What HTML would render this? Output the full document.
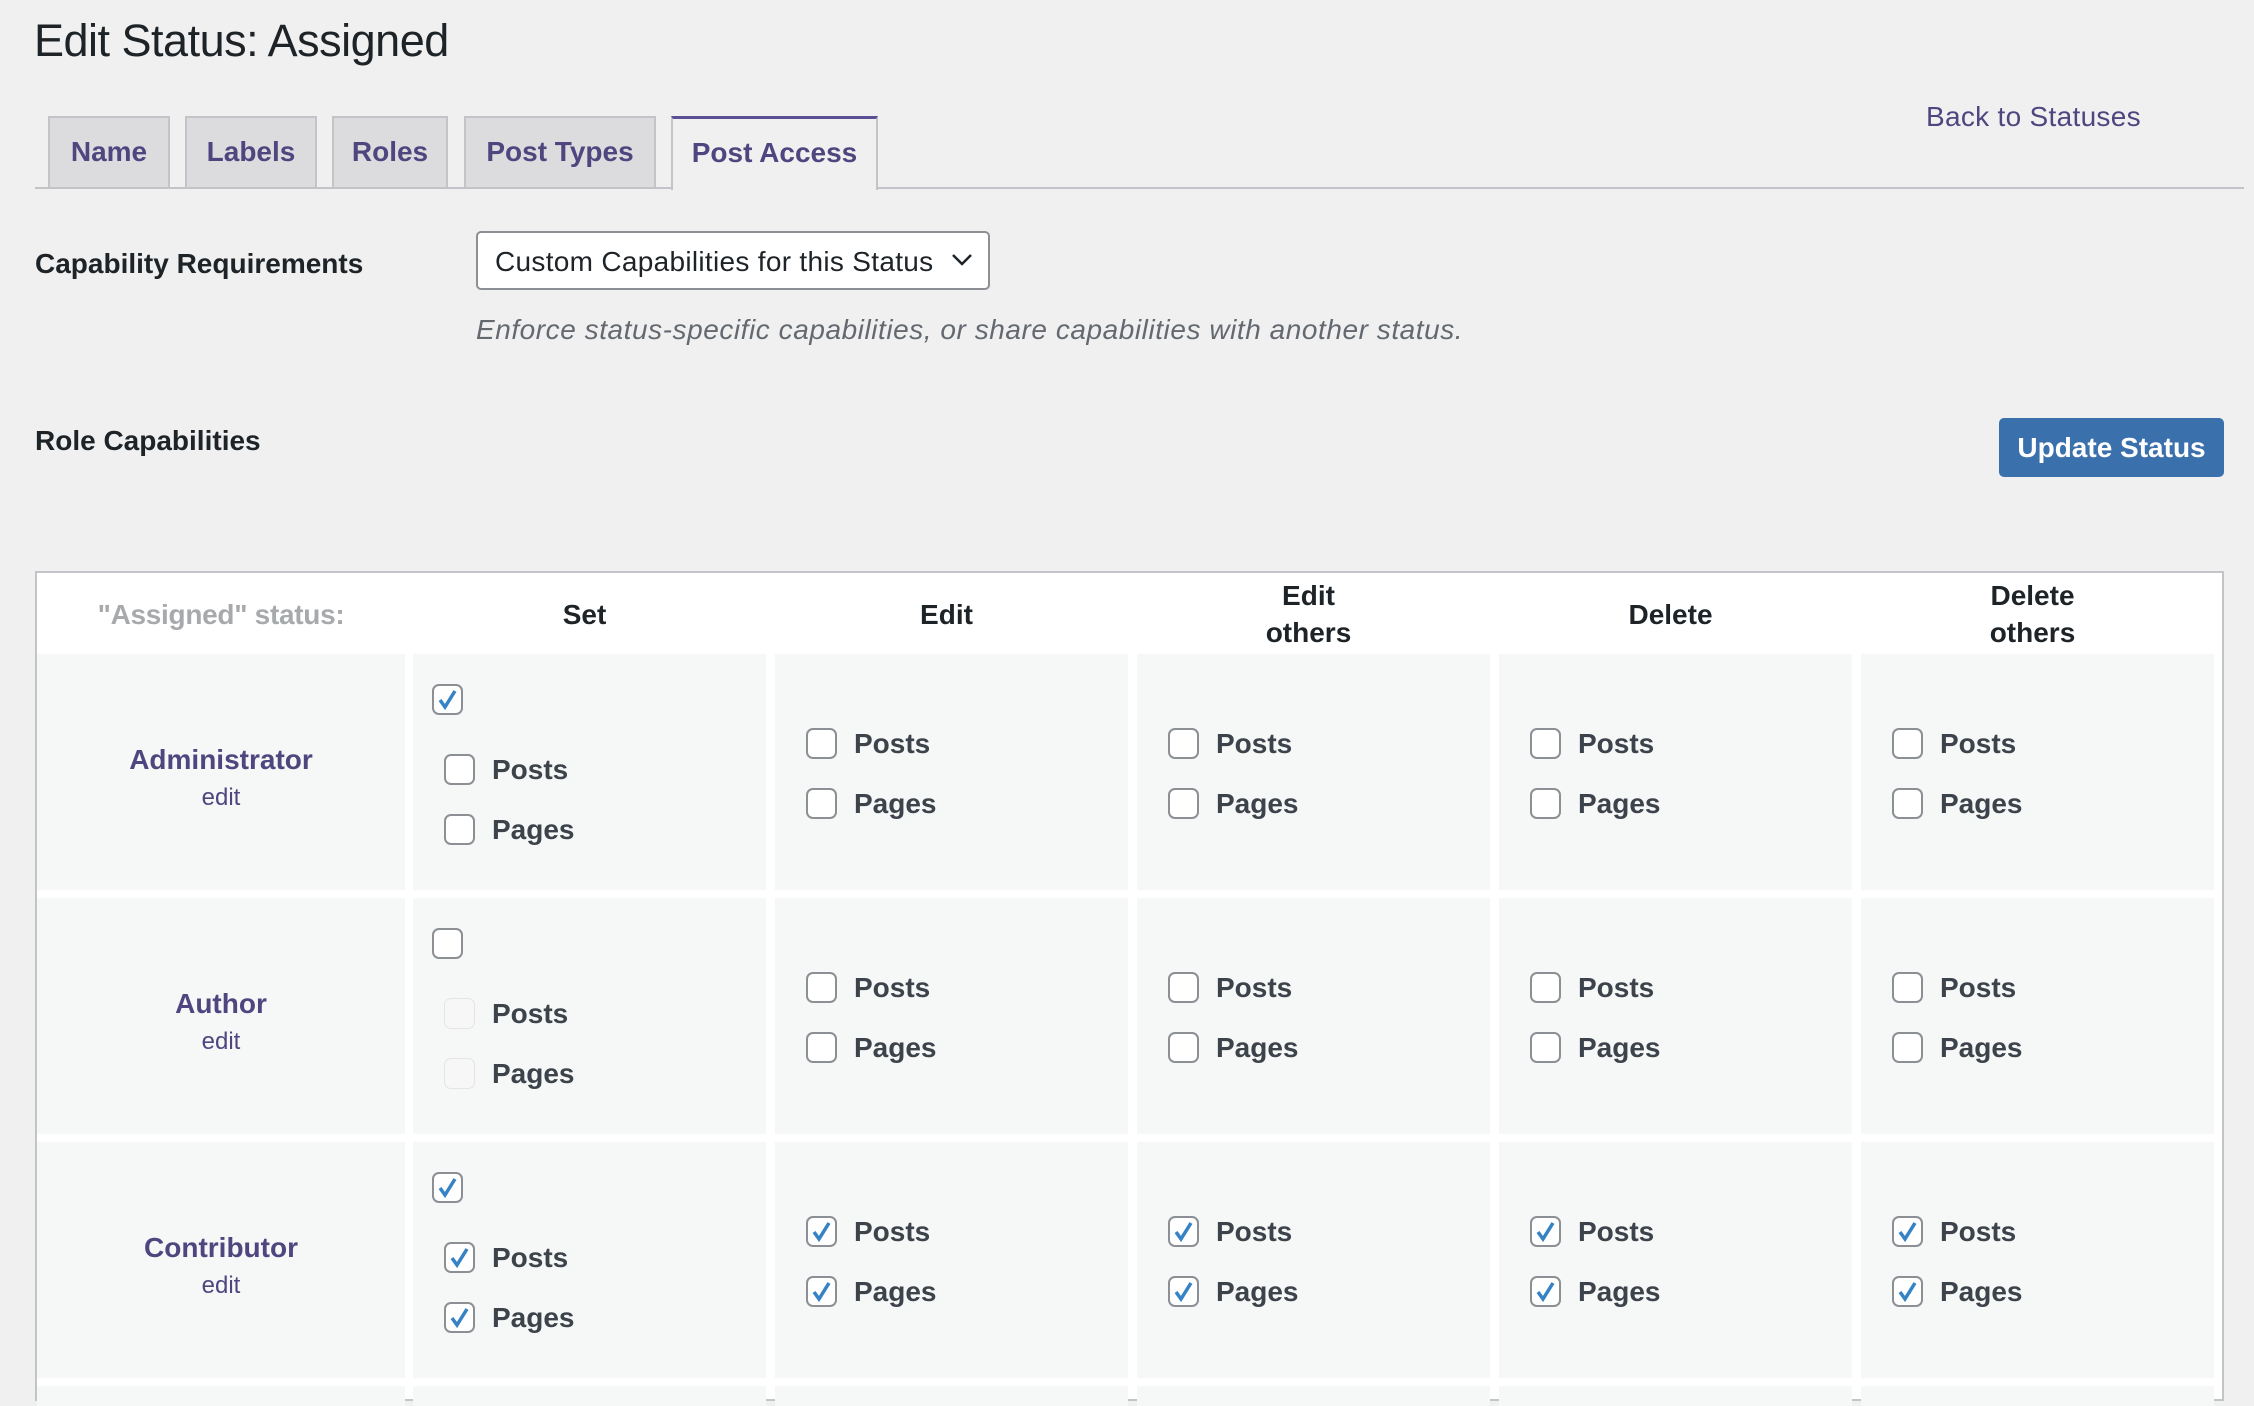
<!DOCTYPE html>
<html><head><meta charset="utf-8">
<style>
*{margin:0;padding:0;box-sizing:border-box}
body{width:2254px;height:1390px;background:#f0f0f1;font-family:"Liberation Sans",Arial,sans-serif;position:relative;overflow:hidden;color:#1d2327}
.a{position:absolute;white-space:nowrap}
.tab{position:absolute;top:116px;height:72px;background:#dcdcde;border:2px solid #c3c4c7;border-bottom:none;color:#50467f;font-size:28px;font-weight:bold;line-height:68px;text-align:center}
.cell{position:absolute;background:#f6f7f7}
.cb{position:absolute;width:31px;height:31px;border:2px solid #8c8f94;border-radius:7px;background:#fff}
.cb.d{border:1px solid #e4e4e6;background:#f7f7f7}
.cb svg{position:absolute;left:2px;top:2px}
.lb{position:absolute;font-size:28px;font-weight:bold;color:#3c434a;line-height:32px}
.h{position:absolute;font-size:28px;font-weight:bold;color:#1d2327;text-align:center;line-height:37px}
.rn{position:absolute;left:37px;width:368px;text-align:center;font-size:28px;font-weight:bold;color:#50467f}
.re{position:absolute;left:37px;width:368px;text-align:center;font-size:24px;color:#50467f}
</style></head><body>
<div class="a" style="left:34px;top:13px;font-size:45px;line-height:56px;color:#1d2327;letter-spacing:-0.5px">Edit Status: Assigned</div>

<div class="tab" style="left:48px;width:122px">Name</div>
<div class="tab" style="left:185px;width:132px">Labels</div>
<div class="tab" style="left:332px;width:116px">Roles</div>
<div class="tab" style="left:464px;width:192px">Post Types</div>
<div class="tab" style="left:671px;width:207px;background:#f0f0f1;border-top:3px solid #5b4f96;height:74px;z-index:2">Post Access</div>
<div class="a" style="left:35px;top:187px;width:2209px;height:2px;background:#c3c4c7"></div>
<div class="a" style="left:1926px;top:100px;font-size:28px;line-height:34px;color:#50467f;letter-spacing:0.3px">Back to Statuses</div>

<div class="a" style="left:35px;top:248px;font-size:28px;font-weight:bold;line-height:32px">Capability Requirements</div>
<div class="a" style="left:476px;top:231px;width:514px;height:59px;background:#fff;border:2px solid #8c8f94;border-radius:5px"></div>
<div class="a" style="left:495px;top:246px;font-size:28px;line-height:32px;letter-spacing:0.3px">Custom Capabilities for this Status</div>
<svg class="a" style="left:950px;top:252px" width="24" height="16" viewBox="0 0 24 16"><path d="M3 3 L12 12 L21 3" fill="none" stroke="#1d2327" stroke-width="2.5"/></svg>
<div class="a" style="left:476px;top:314px;font-size:28px;font-style:italic;line-height:32px;color:#646970;letter-spacing:0.55px">Enforce status-specific capabilities, or share capabilities with another status.</div>

<div class="a" style="left:35px;top:425px;font-size:28px;font-weight:bold;line-height:32px">Role Capabilities</div>
<div class="a" style="left:1999px;top:418px;width:225px;height:59px;background:#3a70ab;border-radius:5px;color:#fff;font-size:28px;font-weight:bold;line-height:59px;text-align:center">Update Status</div>

<div class="a" style="left:35px;top:571px;width:2189px;height:830px;background:#fff;border:2px solid #c3c4c7"></div>
<div class="h" style="left:37px;width:368px;top:596px;color:#a7aaad;letter-spacing:-0.3px">"Assigned" status:</div>
<div class="h" style="left:413px;width:343px;top:596px">Set</div>
<div class="h" style="left:775px;width:343px;top:596px">Edit</div>
<div class="h" style="left:1137px;width:343px;top:577px">Edit<br>others</div>
<div class="h" style="left:1499px;width:343px;top:596px">Delete</div>
<div class="h" style="left:1861px;width:343px;top:577px">Delete<br>others</div>

<!-- cells -->
<div class="cell" style="left:37px;top:654px;width:368px;height:236px"></div>
<div class="cell" style="left:413px;top:654px;width:353px;height:236px"></div>
<div class="cell" style="left:775px;top:654px;width:353px;height:236px"></div>
<div class="cell" style="left:1137px;top:654px;width:353px;height:236px"></div>
<div class="cell" style="left:1499px;top:654px;width:353px;height:236px"></div>
<div class="cell" style="left:1861px;top:654px;width:353px;height:236px"></div>
<div class="cell" style="left:37px;top:898px;width:368px;height:236px"></div>
<div class="cell" style="left:413px;top:898px;width:353px;height:236px"></div>
<div class="cell" style="left:775px;top:898px;width:353px;height:236px"></div>
<div class="cell" style="left:1137px;top:898px;width:353px;height:236px"></div>
<div class="cell" style="left:1499px;top:898px;width:353px;height:236px"></div>
<div class="cell" style="left:1861px;top:898px;width:353px;height:236px"></div>
<div class="cell" style="left:37px;top:1142px;width:368px;height:236px"></div>
<div class="cell" style="left:413px;top:1142px;width:353px;height:236px"></div>
<div class="cell" style="left:775px;top:1142px;width:353px;height:236px"></div>
<div class="cell" style="left:1137px;top:1142px;width:353px;height:236px"></div>
<div class="cell" style="left:1499px;top:1142px;width:353px;height:236px"></div>
<div class="cell" style="left:1861px;top:1142px;width:353px;height:236px"></div>
<div class="cell" style="left:37px;top:1386px;width:368px;height:20px"></div>
<div class="cell" style="left:413px;top:1386px;width:353px;height:20px"></div>
<div class="cell" style="left:775px;top:1386px;width:353px;height:20px"></div>
<div class="cell" style="left:1137px;top:1386px;width:353px;height:20px"></div>
<div class="cell" style="left:1499px;top:1386px;width:353px;height:20px"></div>
<div class="cell" style="left:1861px;top:1386px;width:353px;height:20px"></div>

<!-- Row 1: Administrator -->
<div class="rn" style="top:744px">Administrator</div>
<div class="re" style="top:784px">edit</div>
<div class="cb" style="left:432px;top:684px"><svg width="23" height="23" viewBox="0 0 23 23"><path d="M4 12 L9 19 L19 3" fill="none" stroke="#3582c4" stroke-width="3.5"/></svg></div>
<div class="cb" style="left:444px;top:754px"></div><div class="lb" style="left:492px;top:754px">Posts</div>
<div class="cb" style="left:444px;top:814px"></div><div class="lb" style="left:492px;top:814px">Pages</div>
<div class="cb" style="left:806px;top:728px"></div><div class="lb" style="left:854px;top:728px">Posts</div>
<div class="cb" style="left:806px;top:788px"></div><div class="lb" style="left:854px;top:788px">Pages</div>
<div class="cb" style="left:1168px;top:728px"></div><div class="lb" style="left:1216px;top:728px">Posts</div>
<div class="cb" style="left:1168px;top:788px"></div><div class="lb" style="left:1216px;top:788px">Pages</div>
<div class="cb" style="left:1530px;top:728px"></div><div class="lb" style="left:1578px;top:728px">Posts</div>
<div class="cb" style="left:1530px;top:788px"></div><div class="lb" style="left:1578px;top:788px">Pages</div>
<div class="cb" style="left:1892px;top:728px"></div><div class="lb" style="left:1940px;top:728px">Posts</div>
<div class="cb" style="left:1892px;top:788px"></div><div class="lb" style="left:1940px;top:788px">Pages</div>

<!-- Row 2: Author -->
<div class="rn" style="top:988px">Author</div>
<div class="re" style="top:1028px">edit</div>
<div class="cb" style="left:432px;top:928px"></div>
<div class="cb d" style="left:444px;top:998px"></div><div class="lb" style="left:492px;top:998px">Posts</div>
<div class="cb d" style="left:444px;top:1058px"></div><div class="lb" style="left:492px;top:1058px">Pages</div>
<div class="cb" style="left:806px;top:972px"></div><div class="lb" style="left:854px;top:972px">Posts</div>
<div class="cb" style="left:806px;top:1032px"></div><div class="lb" style="left:854px;top:1032px">Pages</div>
<div class="cb" style="left:1168px;top:972px"></div><div class="lb" style="left:1216px;top:972px">Posts</div>
<div class="cb" style="left:1168px;top:1032px"></div><div class="lb" style="left:1216px;top:1032px">Pages</div>
<div class="cb" style="left:1530px;top:972px"></div><div class="lb" style="left:1578px;top:972px">Posts</div>
<div class="cb" style="left:1530px;top:1032px"></div><div class="lb" style="left:1578px;top:1032px">Pages</div>
<div class="cb" style="left:1892px;top:972px"></div><div class="lb" style="left:1940px;top:972px">Posts</div>
<div class="cb" style="left:1892px;top:1032px"></div><div class="lb" style="left:1940px;top:1032px">Pages</div>

<!-- Row 3: Contributor -->
<div class="rn" style="top:1232px">Contributor</div>
<div class="re" style="top:1272px">edit</div>
<div class="cb" style="left:432px;top:1172px"><svg width="23" height="23" viewBox="0 0 23 23"><path d="M4 12 L9 19 L19 3" fill="none" stroke="#3582c4" stroke-width="3.5"/></svg></div>
<div class="cb" style="left:444px;top:1242px"><svg width="23" height="23" viewBox="0 0 23 23"><path d="M4 12 L9 19 L19 3" fill="none" stroke="#3582c4" stroke-width="3.5"/></svg></div><div class="lb" style="left:492px;top:1242px">Posts</div>
<div class="cb" style="left:444px;top:1302px"><svg width="23" height="23" viewBox="0 0 23 23"><path d="M4 12 L9 19 L19 3" fill="none" stroke="#3582c4" stroke-width="3.5"/></svg></div><div class="lb" style="left:492px;top:1302px">Pages</div>
<div class="cb" style="left:806px;top:1216px"><svg width="23" height="23" viewBox="0 0 23 23"><path d="M4 12 L9 19 L19 3" fill="none" stroke="#3582c4" stroke-width="3.5"/></svg></div><div class="lb" style="left:854px;top:1216px">Posts</div>
<div class="cb" style="left:806px;top:1276px"><svg width="23" height="23" viewBox="0 0 23 23"><path d="M4 12 L9 19 L19 3" fill="none" stroke="#3582c4" stroke-width="3.5"/></svg></div><div class="lb" style="left:854px;top:1276px">Pages</div>
<div class="cb" style="left:1168px;top:1216px"><svg width="23" height="23" viewBox="0 0 23 23"><path d="M4 12 L9 19 L19 3" fill="none" stroke="#3582c4" stroke-width="3.5"/></svg></div><div class="lb" style="left:1216px;top:1216px">Posts</div>
<div class="cb" style="left:1168px;top:1276px"><svg width="23" height="23" viewBox="0 0 23 23"><path d="M4 12 L9 19 L19 3" fill="none" stroke="#3582c4" stroke-width="3.5"/></svg></div><div class="lb" style="left:1216px;top:1276px">Pages</div>
<div class="cb" style="left:1530px;top:1216px"><svg width="23" height="23" viewBox="0 0 23 23"><path d="M4 12 L9 19 L19 3" fill="none" stroke="#3582c4" stroke-width="3.5"/></svg></div><div class="lb" style="left:1578px;top:1216px">Posts</div>
<div class="cb" style="left:1530px;top:1276px"><svg width="23" height="23" viewBox="0 0 23 23"><path d="M4 12 L9 19 L19 3" fill="none" stroke="#3582c4" stroke-width="3.5"/></svg></div><div class="lb" style="left:1578px;top:1276px">Pages</div>
<div class="cb" style="left:1892px;top:1216px"><svg width="23" height="23" viewBox="0 0 23 23"><path d="M4 12 L9 19 L19 3" fill="none" stroke="#3582c4" stroke-width="3.5"/></svg></div><div class="lb" style="left:1940px;top:1216px">Posts</div>
<div class="cb" style="left:1892px;top:1276px"><svg width="23" height="23" viewBox="0 0 23 23"><path d="M4 12 L9 19 L19 3" fill="none" stroke="#3582c4" stroke-width="3.5"/></svg></div><div class="lb" style="left:1940px;top:1276px">Pages</div>
</body></html>
